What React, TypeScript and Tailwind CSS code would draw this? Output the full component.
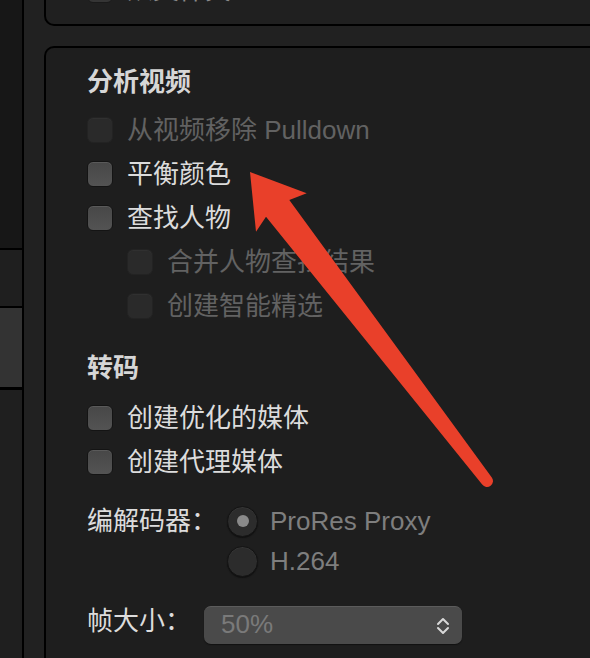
import React from "react";

const FONT = "font-['Liberation_Sans','Noto_Sans_CJK_SC',sans-serif]";

function Checkbox({ disabled }: { disabled?: boolean }) {
  return disabled ? (
    <div className="w-[26px] h-[26px] shrink-0 rounded-[6px] bg-[#2a2a2a] border border-[#232323] shadow-[inset_0_1px_0_#303030]" />
  ) : (
    <div className="w-[26px] h-[26px] shrink-0 rounded-[6px] bg-gradient-to-b from-[#474747] to-[#535353] border border-[#141414] shadow-[inset_0_1px_0_#5a5a5a]" />
  );
}

function CheckRow({ label, disabled, indent }: { label: string; disabled?: boolean; indent?: boolean }) {
  return (
    <div className={`flex items-center h-[44px] ${indent ? "pl-[40px]" : ""}`}>
      <Checkbox disabled={disabled} />
      <span className={`ml-[14px] whitespace-nowrap ${disabled ? "text-[#626262]" : "text-[#dcdcdc]"}`}>{label}</span>
    </div>
  );
}

function Radio({ selected }: { selected?: boolean }) {
  return (
    <div className="w-[31px] h-[31px] shrink-0 rounded-full bg-[#2c2c2c] border border-[#141414] shadow-[inset_0_1px_0_#363636,0_1px_1px_#111] flex items-center justify-center">
      {selected && <div className="w-[12px] h-[12px] rounded-full bg-[#8a8a8a]" />}
    </div>
  );
}

export default function App() {
  return (
    <div className={`relative w-[590px] h-[658px] overflow-hidden flex bg-[#212121] text-[26px] leading-[36px] ${FONT}`}>
      {/* left column */}
      <div className="w-[22px] flex flex-col shrink-0">
        <div className="h-[248px] bg-[#171717]" />
        <div className="h-[2px] bg-black" />
        <div className="h-[56px] bg-[#1f1f1f]" />
        <div className="h-[2px] bg-black" />
        <div className="h-[79px] bg-[#333333]" />
        <div className="h-[3px] bg-black" />
        <div className="flex-1 bg-[#1f1f1f]" />
      </div>
      <div className="w-[2px] bg-black shrink-0" />
      {/* main */}
      <div className="flex-1 flex flex-col pl-[20px]">
        {/* top panel (cut off) */}
        <div className="h-[26px] shrink-0 overflow-hidden bg-[#202020] border-l-2 border-b-2 border-black rounded-bl-[10px]">
          <div className="mt-[-32px] pl-[41px]">
            <div className="flex items-center h-[44px]">
              <div className="w-[26px] h-[26px] shrink-0 rounded-[6px] bg-[#353535] border border-[#1a1a1a]" />
              <span className="ml-[14px] text-[#8a8a8a] whitespace-nowrap">从文件夹</span>
            </div>
          </div>
        </div>
        <div className="h-[20px] shrink-0" />
        {/* analysis panel */}
        <div className="flex-1 bg-[#1e1e1e] border-l-2 border-t-2 border-black rounded-tl-[10px] pl-[41px] pt-[16px] flex flex-col">
          <div className="h-[36px] flex items-center font-semibold text-[#d6d6d6]">分析视频</div>
          <div className="mt-[8px]" />
          <CheckRow label="从视频移除 Pulldown" disabled />
          <CheckRow label="平衡颜色" />
          <CheckRow label="查找人物" />
          <CheckRow label="合并人物查找结果" disabled indent />
          <CheckRow label="创建智能精选" disabled indent />
          <div className="mt-[22px] h-[36px] flex items-center font-semibold text-[#d6d6d6]">转码</div>
          <div className="mt-[10px]" />
          <CheckRow label="创建优化的媒体" />
          <CheckRow label="创建代理媒体" />
          {/* codec */}
          <div className="mt-[17px] flex">
            <div className="w-[140px] shrink-0 h-[40px] flex items-center text-[#dcdcdc]">编解码器：</div>
            <div className="flex flex-col">
              <div className="h-[40px] flex items-center">
                <Radio selected />
                <span className="ml-[12px] text-[#7e7e7e] whitespace-nowrap">ProRes Proxy</span>
              </div>
              <div className="h-[40px] flex items-center">
                <Radio />
                <span className="ml-[12px] text-[#7e7e7e] whitespace-nowrap">H.264</span>
              </div>
            </div>
          </div>
          {/* frame size */}
          <div className="mt-[25px] flex items-center">
            <div className="w-[117px] shrink-0 h-[38px] flex items-center text-[#dcdcdc] -mt-[8px]">帧大小：</div>
            <div className="w-[258px] h-[38px] rounded-[7px] bg-[#4a4a4a] border-t border-[#5c5c5c] shadow-[0_1px_1px_#111] flex items-center pl-[17px] pr-[12px]">
              <span className="flex-1 text-[#7a7a7a] pb-[4px]">50%</span>
              <svg width="14" height="20" viewBox="0 0 14 20" fill="none">
                <polyline points="2,8 7,3 12,8" stroke="#d8d8d8" strokeWidth="2" strokeLinecap="round" strokeLinejoin="round" />
                <polyline points="2,12 7,17 12,12" stroke="#d8d8d8" strokeWidth="2" strokeLinecap="round" strokeLinejoin="round" />
              </svg>
            </div>
          </div>
        </div>
      </div>
      {/* annotation arrow */}
      <svg className="absolute inset-0 pointer-events-none" width="590" height="658" viewBox="0 0 590 658">
        <path
          d="M250 172 L306.7 193.3 L289.3 200 L491.8 477.4 A6 6 0 0 1 482.2 484.6 L266 216.7 L256 231.7 Z"
          fill="#e9402a"
        />
      </svg>
    </div>
  );
}
